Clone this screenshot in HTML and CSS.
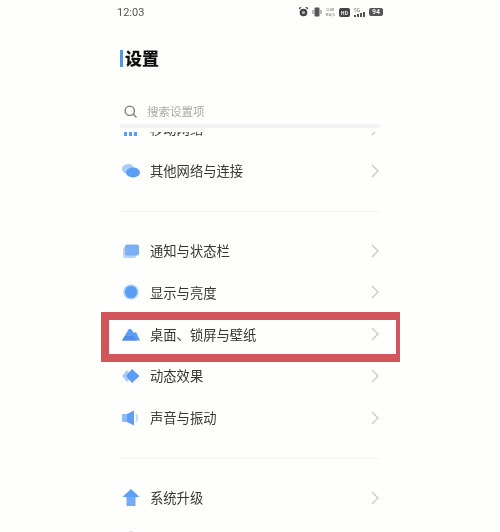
FILE: index.html
```html
<!DOCTYPE html>
<html lang="zh-CN">
<head>
  <meta charset="UTF-8">
  <meta name="viewport" content="width=device-width, initial-scale=1.0">
  <title>设置</title>
  <link rel="stylesheet" href="styles.css">
</head>
<body>
  <div class="screen">
    <div class="status-bar">
      <span class="clock">12:03</span>
      <div class="status-icons">
        <svg width="9" height="10" viewBox="0 0 9 10"><circle cx="4.5" cy="5.5" r="3.8" fill="#444"/><circle cx="4.5" cy="5.5" r="1.6" fill="#bbb"/><path d="M0 2 L2 0 M9 2 L7 0" stroke="#444" stroke-width="1.3"/></svg>
        <svg width="10" height="10" viewBox="0 0 10 10"><rect x="2.5" y="0.5" width="5" height="9" rx="1.2" fill="#555"/><path d="M1 3v4M9 3v4" stroke="#777"/></svg>
        <span class="net-speed">0.00<br>KB/S</span>
        <span class="hd">HD</span>
        <div class="signal">
          <span class="net-type">5G</span>
          <svg width="11" height="5" viewBox="0 0 11 5"><path d="M0 3h2v2H0zM3 2h2v3H3zM6 1h2v4H6zM9 0h2v5H9z" fill="#555"/></svg>
        </div>
        <span class="battery">94</span>
      </div>
    </div>

    <h1 class="page-title">设置</h1>

    <div class="search">
      <svg width="13" height="13" viewBox="0 0 14 14" fill="none" stroke="#7d7d7d" stroke-width="1.5"><circle cx="6.2" cy="6.2" r="5"/><path d="M10 10l3 3" stroke-linecap="round"/></svg>
      <span>搜索设置项</span>
    </div>

    <div class="scroll-area">
      <div class="group group-first">
        <div class="row">
          <svg class="icon" viewBox="0 0 18 18"><path d="M2 8h3v8H2zM7 5h3v11H7zM12 8h3v8h-3z" fill="#5b9bf5"/></svg>
          <span class="label">移动网络</span>
          <svg class="chevron" viewBox="0 0 8 14"><path d="M1 1l6 6-6 6"/></svg>
        </div>
        <div class="row">
          <svg class="icon" viewBox="0 0 18 18"><ellipse cx="6" cy="7" rx="6" ry="5" fill="#a9cdf8"/><ellipse cx="11" cy="10.500" rx="7" ry="5" fill="#5c9df6"/></svg>
          <span class="label">其他网络与连接</span>
          <svg class="chevron" viewBox="0 0 8 14"><path d="M1 1l6 6-6 6"/></svg>
        </div>
      </div>

      <div class="group">
        <div class="row">
          <svg class="icon" viewBox="0 0 18 18"><rect x="1" y="5" width="13" height="11" rx="2" fill="#b5d3f9"/><rect x="3" y="2.500" width="14" height="11" rx="2" fill="#7eaff3"/></svg>
          <span class="label">通知与状态栏</span>
          <svg class="chevron" viewBox="0 0 8 14"><path d="M1 1l6 6-6 6"/></svg>
        </div>
        <div class="row">
          <svg class="icon" viewBox="0 0 18 18"><circle cx="9" cy="9" r="7.800" fill="#bcd8fb"/><circle cx="9" cy="9" r="6.300" fill="#5c9df6"/></svg>
          <span class="label">显示与亮度</span>
          <svg class="chevron" viewBox="0 0 8 14"><path d="M1 1l6 6-6 6"/></svg>
        </div>
        <div class="row">
          <svg class="icon" viewBox="0 0 18 18"><path d="M0 15.500L6.500 4.500Q8 3 9.500 4.500L12 8l2-1 4 8.500z" fill="#5c9df6"/><path d="M0 15.500L3 11h8l4 4.500z" fill="#4f8ee6"/></svg>
          <span class="label">桌面、锁屏与壁纸</span>
          <svg class="chevron" viewBox="0 0 8 14"><path d="M1 1l6 6-6 6"/></svg>
        </div>
        <div class="row">
          <svg class="icon" viewBox="0 0 18 18"><path d="M5 3l6 6-6 6-5-6z" fill="#a9cdf8"/><path d="M10 2l7.500 7-7.500 7-6-7z" fill="#5c9df6"/></svg>
          <span class="label">动态效果</span>
          <svg class="chevron" viewBox="0 0 8 14"><path d="M1 1l6 6-6 6"/></svg>
        </div>
        <div class="row">
          <svg class="icon" viewBox="0 0 18 18"><rect x="0" y="5" width="6" height="8" rx="1" fill="#8dbaf6"/><path d="M5 5l7-3.500v15L5 13z" fill="#5c9df6"/><path d="M14 5c1.500 2 1.500 6 0 8" fill="none" stroke="#c5dcfa" stroke-width="2"/></svg>
          <span class="label">声音与振动</span>
          <svg class="chevron" viewBox="0 0 8 14"><path d="M1 1l6 6-6 6"/></svg>
        </div>
      </div>

      <div class="group">
        <div class="row">
          <svg class="icon" viewBox="0 0 18 18"><path d="M9 0l8.500 8H0.500z" fill="#5c9df6"/><path d="M4.500 8h9v9h-9z" fill="#74abf6"/></svg>
          <span class="label">系统升级</span>
          <svg class="chevron" viewBox="0 0 8 14"><path d="M1 1l6 6-6 6"/></svg>
        </div>
        <div class="row">
          <svg class="icon" viewBox="0 0 18 18"><circle cx="9" cy="9" r="7.500" fill="#8dbaf6"/></svg>
          <span class="label">系统管理</span>
          <svg class="chevron" viewBox="0 0 8 14"><path d="M1 1l6 6-6 6"/></svg>
        </div>
      </div>
    </div>
  </div>

  <div class="highlight"></div>
</body>
</html>
```

FILE: styles.css
```css
html, body {
  height: 532px;
  margin: 0;
  overflow: hidden;
}
body {
  position: relative;
  background: #fefefd;
  font-family: "Noto Sans CJK SC", "Liberation Sans", sans-serif;
  color: #363636;
}
.screen {
  padding: 0 120px;
  filter: blur(0.4px);
}

.status-bar {
  height: 24px;
  display: flex;
  align-items: center;
  justify-content: space-between;
}
.clock {
  margin-left: -3px;
  font-family: "Roboto", sans-serif;
  font-size: 11px;
  color: #555;
}
.status-icons {
  display: flex;
  align-items: center;
  gap: 4px;
  margin-right: -3px;
}
.net-speed {
  font-size: 4px;
  line-height: 5px;
  color: #666;
  text-align: center;
}
.hd {
  background: #444;
  color: #eee;
  border-radius: 2px;
  width: 11px;
  height: 9px;
  font-size: 5px;
  line-height: 9px;
  font-weight: 700;
  text-align: center;
}
.signal {
  display: flex;
  flex-direction: column;
}
.net-type {
  font-size: 5px;
  line-height: 5px;
  color: #666;
}
.battery {
  background: #555;
  color: #eee;
  border-radius: 2px;
  width: 14px;
  height: 8px;
  font-family: "Roboto", sans-serif;
  font-size: 7px;
  line-height: 8px;
  font-weight: 700;
  text-align: center;
}

.page-title {
  margin: 22px 0 0;
  height: 24px;
  display: flex;
  align-items: center;
  gap: 2px;
  font-size: 17px;
  line-height: 24px;
  font-weight: 900;
  color: #111;
}
.page-title::before {
  content: "";
  width: 3px;
  height: 17px;
  background: #5b93dc;
}

.search {
  margin-top: 26px;
  padding-top: 2px;
  height: 26px;
  display: flex;
  align-items: center;
  gap: 10px;
  padding-left: 4px;
  border-bottom: 4px solid #f3f3f3;
  font-size: 11.500px;
  color: #a9a9a9;
}

.scroll-area {
  height: 400px;
  overflow: hidden;
  border-top: 4px solid #fefefd;
}
.group {
  padding-bottom: 19px;
  border-bottom: 1px solid #f4f4f4;
  margin-bottom: 18.250px;
}
.group-first {
  margin-top: -24px;
}
.row {
  height: 41.750px;
  display: flex;
  align-items: center;
  font-size: 13.300px;
}
.icon {
  width: 18px;
  height: 18px;
  margin-left: 2px;
  flex: none;
}
.label {
  flex: 1;
  margin-left: 10px;
}
.chevron {
  width: 8px;
  height: 14px;
  margin-right: 1px;
  fill: none;
  stroke: #c8c8c8;
  stroke-width: 1.300;
}

.highlight {
  position: absolute;
  left: 101px;
  top: 312px;
  width: 299px;
  height: 50px;
  box-sizing: border-box;
  border: 8px solid #d2555c;
  border-right-width: 4px;
}
```
